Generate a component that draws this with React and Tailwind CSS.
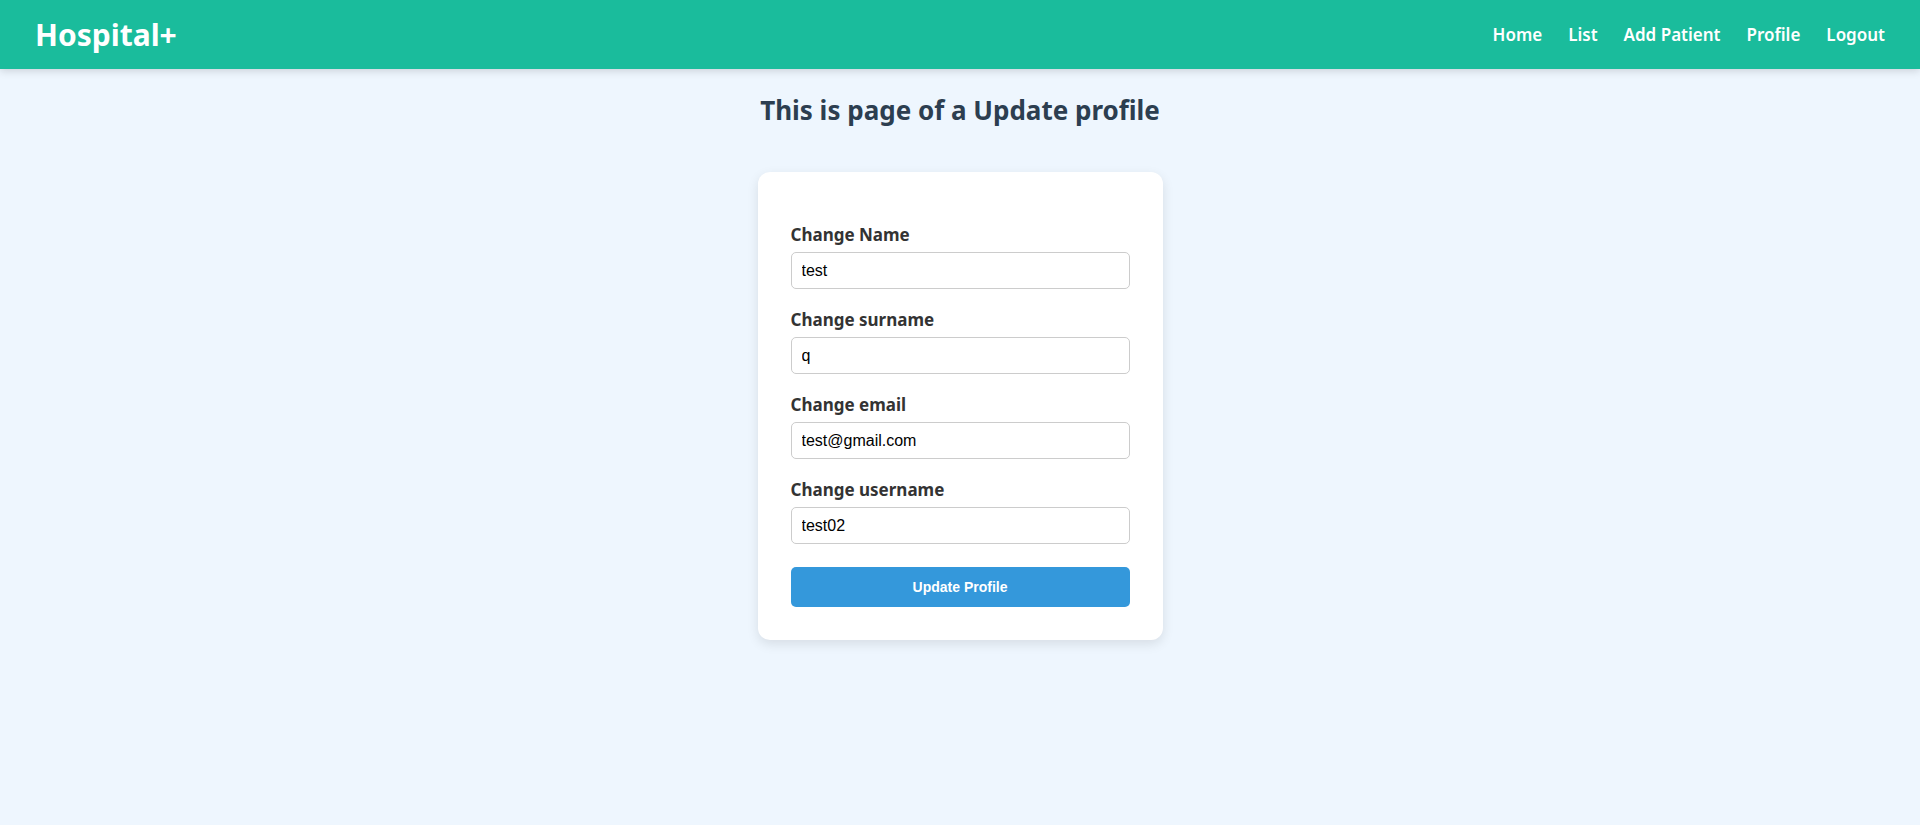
import React, { useState } from 'react';

const Field = ({ label, value, onChange }) => (
  <div className="flex flex-col">
    <label className="mb-[6px] text-[17px] font-bold leading-[22px] text-[#333]">{label}</label>
    <input
      type="text"
      value={value}
      onChange={onChange}
      className="h-[37px] w-full rounded-[5px] border border-[#ccc] bg-white px-[10px] text-[16px] text-black outline-none"
      style={{ fontFamily: 'Arial, "Liberation Sans", sans-serif' }}
    />
  </div>
);

const App = () => {
  const [form, setForm] = useState({
    name: 'test',
    surname: 'q',
    email: 'test@gmail.com',
    username: 'test02',
  });

  const set = (key) => (e) => setForm({ ...form, [key]: e.target.value });

  return (
    <div className="min-h-[825px] bg-[#eef6fe]" style={{ fontFamily: '"Noto Sans", "Open Sans", sans-serif' }}>
      <nav className="relative z-10 flex h-[69px] items-center justify-between bg-[#1abc9c] px-[35px] shadow-[0_2px_8px_rgba(0,0,0,0.15)]">
        <div className="text-[30px] font-bold text-white">Hospital+</div>
        <ul className="flex items-center gap-[26px] text-[17px] font-semibold text-white">
          <li>Home</li>
          <li>List</li>
          <li>Add Patient</li>
          <li>Profile</li>
          <li>Logout</li>
        </ul>
      </nav>

      <main className="flex flex-col items-center">
        <h2 className="mt-[25px] text-[26px] font-bold leading-[32px] text-[#2c3e50]">This is page of a Update profile</h2>

        <div className="mt-[46px] w-[405px] rounded-[12px] bg-white px-[33px] pb-[33px] pt-[52px] shadow-[0_4px_12px_rgba(0,0,0,0.1)]">
          <form className="flex flex-col gap-[20px]" onSubmit={(e) => e.preventDefault()}>
            <Field label="Change Name" value={form.name} onChange={set('name')} />
            <Field label="Change surname" value={form.surname} onChange={set('surname')} />
            <Field label="Change email" value={form.email} onChange={set('email')} />
            <Field label="Change username" value={form.username} onChange={set('username')} />
            <button
              type="submit"
              className="mt-[3px] h-[40px] w-full rounded-[5px] bg-[#3498db] text-[14px] font-bold text-white"
              style={{ fontFamily: 'Arial, "Liberation Sans", sans-serif' }}
            >
              Update Profile
            </button>
          </form>
        </div>
      </main>
    </div>
  );
};

export default App;
